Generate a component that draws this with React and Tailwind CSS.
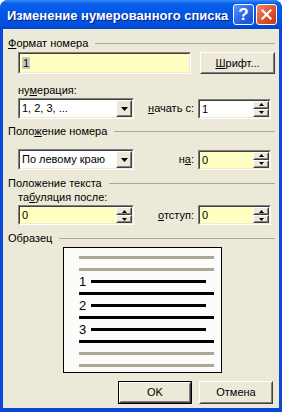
import React from 'react';

// classic 3D sunken frame (edit boxes, combos)
const Sunken = ({ className = '', bg = 'bg-white', children }) => (
  <div className={`border border-t-[#808080] border-l-[#808080] border-b-white border-r-white ${className}`}>
    <div className={`h-full border border-t-[#404040] border-l-[#404040] border-b-[#ECE9D8] border-r-[#ECE9D8] ${bg}`}>
      {children}
    </div>
  </div>
);

// classic 3D raised frame (buttons)
const Raised = ({ className = '', children }) => (
  <div className={`border border-t-white border-l-white border-b-[#404040] border-r-[#404040] bg-[#ECE9D8] ${className}`}>
    <div className="h-full flex items-center justify-center border border-t-[#ECE9D8] border-l-[#ECE9D8] border-b-[#808080] border-r-[#808080]">
      {children}
    </div>
  </div>
);

const DownTri = () => (
  <svg width="7" height="4" viewBox="0 0 7 4">
    <path d="M0 0h7L3.5 4z" fill="#000" />
  </svg>
);

const UpSmall = () => (
  <svg width="5" height="3" viewBox="0 0 5 3">
    <path d="M2.5 0L5 3H0z" fill="#000" />
  </svg>
);

const DownSmall = () => (
  <svg width="5" height="3" viewBox="0 0 5 3">
    <path d="M0 0h5L2.5 3z" fill="#000" />
  </svg>
);

const Combo = ({ value }) => (
  <Sunken className="w-[116px] h-[21px]">
    <div className="flex h-full">
      <div className="flex-1 pl-[2px] leading-[17px] whitespace-nowrap">{value}</div>
      <Raised className="w-[16px] h-full">
        <DownTri />
      </Raised>
    </div>
  </Sunken>
);

const Spin = ({ value, bg = 'bg-white', className = '' }) => (
  <Sunken className={`h-[20px] ${className}`} bg={bg}>
    <div className="flex h-full">
      <div className="flex-1 pl-[2px] leading-[16px]">{value}</div>
      <div className="flex flex-col w-[16px]">
        <Raised className="h-[8px]">
          <UpSmall />
        </Raised>
        <Raised className="h-[8px]">
          <DownSmall />
        </Raised>
      </div>
    </div>
  </Sunken>
);

const GroupTitle = ({ children, className = '' }) => (
  <div className={`flex items-center h-[13px] ${className}`}>
    <span className="whitespace-nowrap">{children}</span>
    <div className="flex-1 ml-[7px] h-px bg-[#ACA899]" />
  </div>
);

const GrayLine = () => (
  <div className="h-[12px] flex items-center">
    <div className="w-[135px] h-[3px] bg-[#ACA899]" />
  </div>
);

const BlackLine = () => (
  <div className="h-[12px] flex items-center">
    <div className="w-[135px] h-[3px] bg-black" />
  </div>
);

const NumLine = ({ n }) => (
  <div className="h-[12px] flex items-center">
    <span className="w-[12px] text-[13px] leading-none">{n}</span>
    <div className="w-[115px] h-[3px] bg-black" />
  </div>
);

const TitleBar = () => (
  <div className="h-[29px] flex items-center pl-[7px] pr-[5px] pt-[2px] bg-[linear-gradient(to_bottom,#3A8CFA_0%,#0A5FEA_12%,#0056E6_50%,#0050DD_85%,#0044C6_100%)]">
    <span className="flex-1 text-white font-bold text-[13px] leading-[16px] whitespace-nowrap [text-shadow:1px_1px_#0A1E8C]">
      Изменение нумерованного списка
    </span>
    {/* help */}
    <div className="shrink-0 w-[21px] h-[21px] -mt-[2px] rounded-[3px] border border-white bg-[linear-gradient(135deg,#5A95FA,#2260E8_60%,#1A4FD6)] flex items-center justify-center text-white font-bold text-[17px] leading-none">
      ?
    </div>
    {/* close */}
    <div className="shrink-0 w-[21px] h-[21px] -mt-[2px] ml-[2px] rounded-[3px] border border-white bg-[linear-gradient(135deg,#F08A68,#E0502C_55%,#C23A16)] flex items-center justify-center">
      <svg width="11" height="11" viewBox="0 0 11 11">
        <path d="M1.5 1.5l8 8M9.5 1.5l-8 8" stroke="#fff" strokeWidth="2.2" strokeLinecap="square" />
      </svg>
    </div>
  </div>
);

export default function App() {
  return (
    <div className="w-[282px] h-[412px] bg-[#0A48DA] rounded-t-[8px] overflow-hidden flex flex-col font-['Liberation_Sans',Arial,sans-serif] text-[11px] leading-[13px] text-black">
      <TitleBar />

      <div className="flex-1 mx-[3px] mb-[4px] bg-[#ECE9D8] pl-[5px] pr-[4px] pt-[8px] flex flex-col">
        {/* Формат номера */}
        <GroupTitle>
          <u>Ф</u>ормат номера
        </GroupTitle>
        <div className="flex ml-[10px] mt-[2px]">
          <Sunken className="w-[173px] h-[22px]" bg="bg-[#FFFFC1]">
            <div className="pl-[2px] pt-[2px] leading-[14px]">
              <span className="bg-[#C8C8C0] px-px">1</span>
            </div>
          </Sunken>
          <Raised className="w-[75px] h-[22px] ml-auto">
            <span>
              <u>Ш</u>рифт...
            </span>
          </Raised>
        </div>

        <div className="ml-[10px] mt-[10px]">
          ну<u>м</u>ерация:
        </div>
        <div className="flex items-center ml-[10px] mt-[1px] pr-[4px]">
          <Combo value="1, 2, 3, ..." />
          <span className="ml-auto">
            <u>н</u>ачать с:
          </span>
          <Spin value="1" className="w-[73px] ml-[4px]" />
        </div>

        {/* Положение номера */}
        <GroupTitle className="mt-[6px]">
          Поло<u>ж</u>ение номера
        </GroupTitle>
        <div className="flex items-center ml-[10px] mt-[11px] pr-[4px]">
          <Combo value="По левому краю" />
          <span className="ml-auto">
            н<u>а</u>:
          </span>
          <Spin value="0" bg="bg-[#FFFFC1]" className="w-[73px] ml-[4px]" />
        </div>

        {/* Положение текста */}
        <GroupTitle className="mt-[7px]">Положение текста</GroupTitle>
        <div className="ml-[10px] mt-[1px]">
          та<u>б</u>уляция после:
        </div>
        <div className="flex items-center ml-[10px] mt-[1px] pr-[4px]">
          <Spin value="0" bg="bg-[#FFFFC1]" className="w-[116px]" />
          <span className="ml-auto">
            <u>о</u>тступ:
          </span>
          <Spin value="0" bg="bg-[#FFFFC1]" className="w-[73px] ml-[4px]" />
        </div>

        {/* Образец */}
        <GroupTitle className="mt-[7px]">Образец</GroupTitle>
        <div className="ml-[55px] mt-[2px] w-[159px] h-[126px] border border-black bg-[#FCFCFA] pl-[15px] pt-[3px] flex flex-col">
          <GrayLine />
          <GrayLine />
          <NumLine n="1" />
          <BlackLine />
          <NumLine n="2" />
          <BlackLine />
          <NumLine n="3" />
          <BlackLine />
          <GrayLine />
          <GrayLine />
        </div>

        <div className="flex ml-[110px] mt-[8px] gap-[7px]">
          <div className="border border-black">
            <Raised className="w-[72px] h-[21px]">
              <span>OK</span>
            </Raised>
          </div>
          <Raised className="w-[74px] h-[23px]">
            <span>Отмена</span>
          </Raised>
        </div>
      </div>
    </div>
  );
}
